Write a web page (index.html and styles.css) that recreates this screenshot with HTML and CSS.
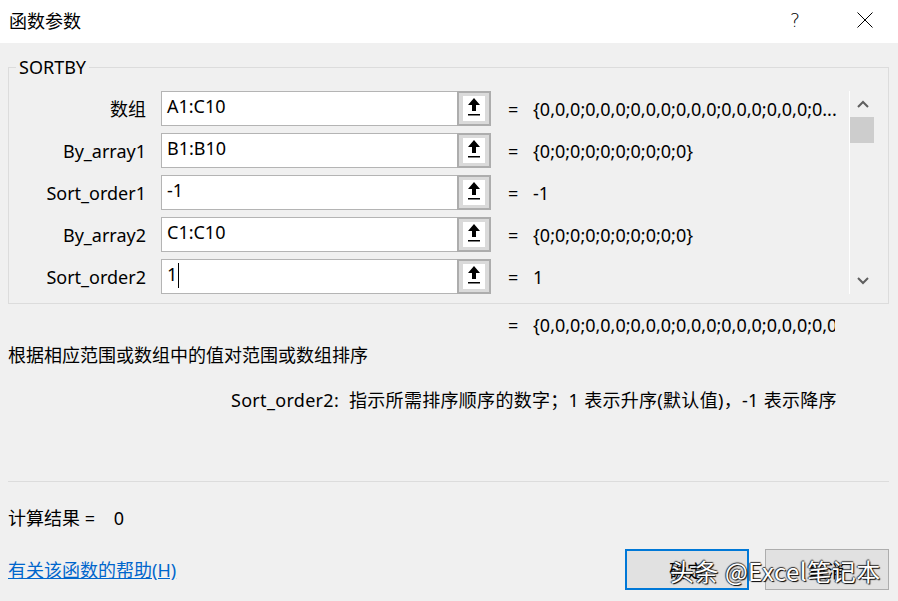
FILE: index.html
```html
<!DOCTYPE html>
<html lang="zh-CN">
<head>
  <meta charset="UTF-8">
  <title>函数参数</title>
  <link rel="stylesheet" href="styles.css">
</head>
<body>
  <div class="dialog">
    <div class="titlebar">
      <span class="title">函数参数</span>
      <span class="help">?</span>
      <span class="close">
        <svg width="16" height="16" viewBox="0 0 16 16"><path d="M0.5 0.5 L15.5 15.5 M15.5 0.5 L0.5 15.5" stroke="#000" stroke-width="1" fill="none"/></svg>
      </span>
    </div>

    <div class="content">
      <fieldset class="group">
        <legend>SORTBY</legend>
        <div class="args">
          <div class="rows">
            <div class="row">
              <label class="lbl">数组</label>
              <div class="field">A1:C10</div>
              <button class="ref"><span class="ref-in"><svg width="12" height="18" viewBox="0 0 12 18"><path d="M6 0 L12 7 H8 V13 H4 V7 H0 Z" fill="#000"/><rect x="0" y="16" width="12" height="1.5" fill="#000"/></svg></span></button>
              <span class="eq">=</span>
              <span class="val">{0,0,0;0,0,0;0,0,0;0,0,0;0,0,0;0,0,0;0...</span>
            </div>
            <div class="row">
              <label class="lbl">By_array1</label>
              <div class="field">B1:B10</div>
              <button class="ref"><span class="ref-in"><svg width="12" height="18" viewBox="0 0 12 18"><path d="M6 0 L12 7 H8 V13 H4 V7 H0 Z" fill="#000"/><rect x="0" y="16" width="12" height="1.5" fill="#000"/></svg></span></button>
              <span class="eq">=</span>
              <span class="val">{0;0;0;0;0;0;0;0;0;0}</span>
            </div>
            <div class="row">
              <label class="lbl">Sort_order1</label>
              <div class="field">-1</div>
              <button class="ref"><span class="ref-in"><svg width="12" height="18" viewBox="0 0 12 18"><path d="M6 0 L12 7 H8 V13 H4 V7 H0 Z" fill="#000"/><rect x="0" y="16" width="12" height="1.5" fill="#000"/></svg></span></button>
              <span class="eq">=</span>
              <span class="val">-1</span>
            </div>
            <div class="row">
              <label class="lbl">By_array2</label>
              <div class="field">C1:C10</div>
              <button class="ref"><span class="ref-in"><svg width="12" height="18" viewBox="0 0 12 18"><path d="M6 0 L12 7 H8 V13 H4 V7 H0 Z" fill="#000"/><rect x="0" y="16" width="12" height="1.5" fill="#000"/></svg></span></button>
              <span class="eq">=</span>
              <span class="val">{0;0;0;0;0;0;0;0;0;0}</span>
            </div>
            <div class="row">
              <label class="lbl">Sort_order2</label>
              <div class="field">1<span class="caret"></span></div>
              <button class="ref"><span class="ref-in"><svg width="12" height="18" viewBox="0 0 12 18"><path d="M6 0 L12 7 H8 V13 H4 V7 H0 Z" fill="#000"/><rect x="0" y="16" width="12" height="1.5" fill="#000"/></svg></span></button>
              <span class="eq">=</span>
              <span class="val">1</span>
            </div>
          </div>

          <div class="scroll">
            <div class="sb-btn">
              <svg width="12" height="8" viewBox="0 0 12 8"><path d="M1 7 L6 2 L11 7" stroke="#5f5f5f" stroke-width="2" fill="none"/></svg>
            </div>
            <div class="sb-thumb"></div>
            <div class="sb-space"></div>
            <div class="sb-btn">
              <svg width="12" height="8" viewBox="0 0 12 8"><path d="M1 1 L6 6 L11 1" stroke="#5f5f5f" stroke-width="2" fill="none"/></svg>
            </div>
          </div>
        </div>
      </fieldset>

      <div class="result-row">
        <span class="eq">=</span>
        <span class="result-val">{0,0,0;0,0,0;0,0,0;0,0,0;0,0,0;0,0,0;0,0,0;0,0,0</span>
      </div>

      <p class="desc">根据相应范围或数组中的值对范围或数组排序</p>
      <p class="arg-help">Sort_order2:  指示所需排序顺序的数字；1 表示升序(默认值)，-1 表示降序</p>

      <div class="sep"></div>

      <p class="calc">计算结果 =    0</p>

      <div class="footer">
        <a class="help-link" href="#">有关该函数的帮助(H)</a>
        <div class="buttons">
          <button class="btn btn-ok">确定</button>
          <button class="btn">取消</button>
        </div>
      </div>
    </div>

    <div class="watermark">头条 @Excel笔记本</div>
  </div>
</body>
</html>
```

FILE: styles.css
```css
* {
  box-sizing: border-box;
}
html, body {
  margin: 0;
  padding: 0;
}
body {
  width: 898px;
  height: 601px;
  background: #f0f0f0;
  font-family: "Noto Sans", "Noto Sans CJK SC", sans-serif;
  font-size: 18px;
  line-height: 24px;
  color: #000;
  overflow: hidden;
}
.dialog {
  position: relative;
  height: 601px;
}

/* title bar */
.titlebar {
  height: 43px;
  background: #fff;
  display: flex;
  align-items: center;
  padding: 0 0 3px 9px;
}
.title {
  flex: 1;
  font-family: "Noto Sans CJK SC", sans-serif;
  font-size: 18px;
}
.help {
  font-family: "DejaVu Sans", sans-serif;
  font-weight: 300;
  font-size: 19px;
  margin-right: 57px;
}
.close {
  display: flex;
  margin-right: 25px;
}

/* arguments group */
.group {
  margin: 12px 9px 0 8px;
  padding: 0 0 9px 0;
  border: 1px solid #dcdcdc;
  min-width: 0;
}
.group legend {
  margin-left: 7px;
  padding: 0 3px;
  font-size: 18px;
  line-height: 24px;
}
.args {
  display: flex;
  margin-top: 12px;
}
.rows {
  width: 840px;
  display: flex;
  flex-direction: column;
  gap: 7px;
}
.row {
  display: flex;
  align-items: center;
  height: 35px;
}
.lbl {
  width: 137px;
  margin-right: 15px;
  text-align: right;
  white-space: nowrap;
}
.field {
  width: 296px;
  height: 35px;
  background: #fff;
  border: 1px solid #b4b4b4;
  border-right: none;
  padding: 0 0 0 5px;
  line-height: 28px;
  display: flex;
  align-items: flex-start;
}
.caret {
  display: inline-block;
  width: 1px;
  height: 25px;
  margin: 3px 0 0 1px;
  background: #000;
}
.ref {
  width: 34px;
  height: 35px;
  border: 2px solid #adadad;
  background: #dadada;
  padding: 3px 4px;
  margin: 0;
  display: flex;
}
.ref-in {
  width: 22px;
  height: 25px;
  background: #fff;
  display: flex;
  justify-content: center;
  padding-top: 2px;
}
.eq {
  width: 26px;
  margin-left: 16px;
  padding-left: 1px;
}
.val {
  flex: 1;
  white-space: nowrap;
  overflow: hidden;
}

/* scrollbar */
.scroll {
  width: 26px;
  height: 203px;
  border-left: 1px solid #fff;
  display: flex;
  flex-direction: column;
}
.sb-btn {
  height: 26px;
  display: flex;
  align-items: center;
  justify-content: center;
}
.sb-thumb {
  height: 26px;
  margin-right: 1px;
  background: #cdcdcd;
}
.sb-space {
  flex: 1;
}

/* text below */
.result-row {
  display: flex;
  margin: 9px 0 0 491px;
  height: 24px;
}
.result-val {
  width: 302px;
  white-space: nowrap;
  overflow: hidden;
}
.desc {
  margin: 6px 0 0 8px;
}
.arg-help {
  margin: 21px 0 0 231px;
  white-space: pre;
  letter-spacing: 0.3px;
}
.sep {
  height: 1px;
  background: #dcdcdc;
  margin: 69px 9px 0 8px;
}
.calc {
  margin: 24px 0 0 8px;
  white-space: pre;
}

/* footer */
.footer {
  display: flex;
  align-items: center;
  justify-content: space-between;
  margin-top: 19px;
  padding: 0 9px 0 8px;
}
.help-link {
  color: #0066cc;
  text-decoration: underline;
}
.buttons {
  display: flex;
  gap: 16px;
}
.btn {
  width: 124px;
  height: 41px;
  background: #e1e1e1;
  border: 1px solid #adadad;
  font-family: "Noto Sans CJK SC", sans-serif;
  font-size: 18px;
  color: #000;
  padding: 0;
}
.btn-ok {
  border: 2px solid #0078d7;
}

/* overlay watermark */
.watermark {
  position: absolute;
  left: 670px;
  top: 555px;
  font-family: "Noto Sans CJK SC", sans-serif;
  font-size: 24px;
  line-height: 32px;
  letter-spacing: 0.5px;
  color: #fff;
  white-space: nowrap;
  text-shadow: 1px 1px 1px #000, -1px 0 1px #333, 0 -1px 1px #333;
}
```
